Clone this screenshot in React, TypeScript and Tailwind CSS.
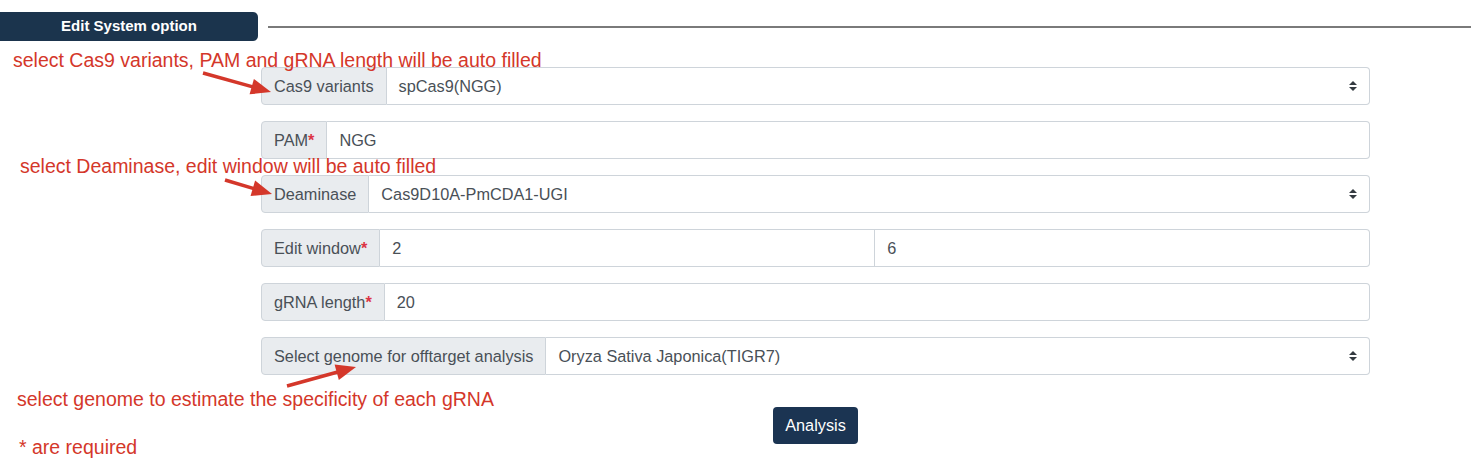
import React from "react";

const font = { fontFamily: '"Liberation Sans", Arial, Helvetica, sans-serif' };

function Chevrons() {
  return (
    <svg width="8" height="10" viewBox="0 0 4 5" className="absolute right-3 top-1/2 -translate-y-1/2">
      <path d="M2 0L0 2h4zm0 5L0 3h4z" fill="#343a40" />
    </svg>
  );
}

function Req() {
  return <span className="text-[#dc3545] font-bold">*</span>;
}

function Label({ children }: { children: React.ReactNode }) {
  return (
    <div className="flex items-center px-3 bg-[#e9ecef] border border-[#ced4da] rounded-l-[4px] text-[16.3px] text-[#495057] whitespace-nowrap">
      {children}
    </div>
  );
}

function Field({ value, select, last = true }: { value: string; select?: boolean; last?: boolean }) {
  return (
    <div
      className={
        "relative flex-1 flex items-center px-3 border border-l-0 border-[#ced4da] bg-white text-[16.3px] text-[#495057] " +
        (last ? "rounded-r-[4px]" : "")
      }
    >
      {value}
      {select && <Chevrons />}
    </div>
  );
}

function Row({ label, children }: { label: React.ReactNode; children: React.ReactNode }) {
  return (
    <div className="flex h-[38px]">
      <Label>{label}</Label>
      {children}
    </div>
  );
}

function Arrow({ x1, y1, x2, y2 }: { x1: number; y1: number; x2: number; y2: number }) {
  const dx = x2 - x1;
  const dy = y2 - y1;
  const len = Math.sqrt(dx * dx + dy * dy);
  const ux = dx / len;
  const uy = dy / len;
  const hl = 20;
  const hw = 8;
  const bx = x2 - ux * hl;
  const by = y2 - uy * hl;
  const p1 = `${bx - uy * hw},${by + ux * hw}`;
  const p2 = `${bx + uy * hw},${by - ux * hw}`;
  return (
    <g>
      <line x1={x1} y1={y1} x2={bx + ux * 2} y2={by + uy * 2} stroke="#d4372a" strokeWidth="3.5" />
      <polygon points={`${x2},${y2} ${p1} ${p2}`} fill="#d4372a" />
    </g>
  );
}

export default function App() {
  return (
    <div className="relative w-full h-[466px] bg-white overflow-hidden" style={font}>
      <div className="flex items-center pt-[12px]">
        <div className="w-[258px] h-[29px] flex items-center justify-center bg-[#1b344d] rounded-r-[5px] text-white font-bold text-[15px]">
          Edit System option
        </div>
        <div className="flex-1 ml-[10px] h-[2px] bg-[#7a7a7a]" />
      </div>

      <div className="ml-[261px] mr-[101px] mt-[26px] flex flex-col gap-4">
        <Row label="Cas9 variants">
          <Field value="spCas9(NGG)" select />
        </Row>
        <Row label={<>PAM<Req /></>}>
          <Field value="NGG" />
        </Row>
        <Row label="Deaminase">
          <Field value="Cas9D10A-PmCDA1-UGI" select />
        </Row>
        <Row label={<>Edit window<Req /></>}>
          <Field value="2" last={false} />
          <Field value="6" />
        </Row>
        <Row label={<>gRNA length<Req /></>}>
          <Field value="20" />
        </Row>
        <Row label="Select genome for offtarget analysis">
          <Field value="Oryza Sativa Japonica(TIGR7)" select />
        </Row>
        <div className="flex justify-center mt-4">
          <button className="h-[37px] px-3 bg-[#1b3452] text-white text-[16.3px] font-medium rounded-[4px]">Analysis</button>
        </div>
      </div>

      <div className="absolute left-[13px] top-[49px] text-[19.5px] leading-[22px] text-[#d4372a] whitespace-nowrap">
        select Cas9 variants, PAM and gRNA length will be auto filled
      </div>
      <div className="absolute left-[20px] top-[155px] text-[19.5px] leading-[22px] text-[#d4372a] whitespace-nowrap">
        select Deaminase, edit window will be auto filled
      </div>
      <div className="absolute left-[17px] top-[388px] text-[19.5px] leading-[22px] text-[#d4372a] whitespace-nowrap">
        select genome to estimate the specificity of each gRNA
      </div>
      <div className="absolute left-[19px] top-[436px] text-[19.5px] leading-[22px] text-[#d4372a] whitespace-nowrap">
        * are required
      </div>

      <svg className="absolute left-0 top-0 pointer-events-none" width="1471" height="466">
        <Arrow x1={203} y1={73} x2={271} y2={92} />
        <Arrow x1={225} y1={180} x2={272} y2={194} />
        <Arrow x1={287} y1={386} x2={356} y2={367} />
      </svg>
    </div>
  );
}
